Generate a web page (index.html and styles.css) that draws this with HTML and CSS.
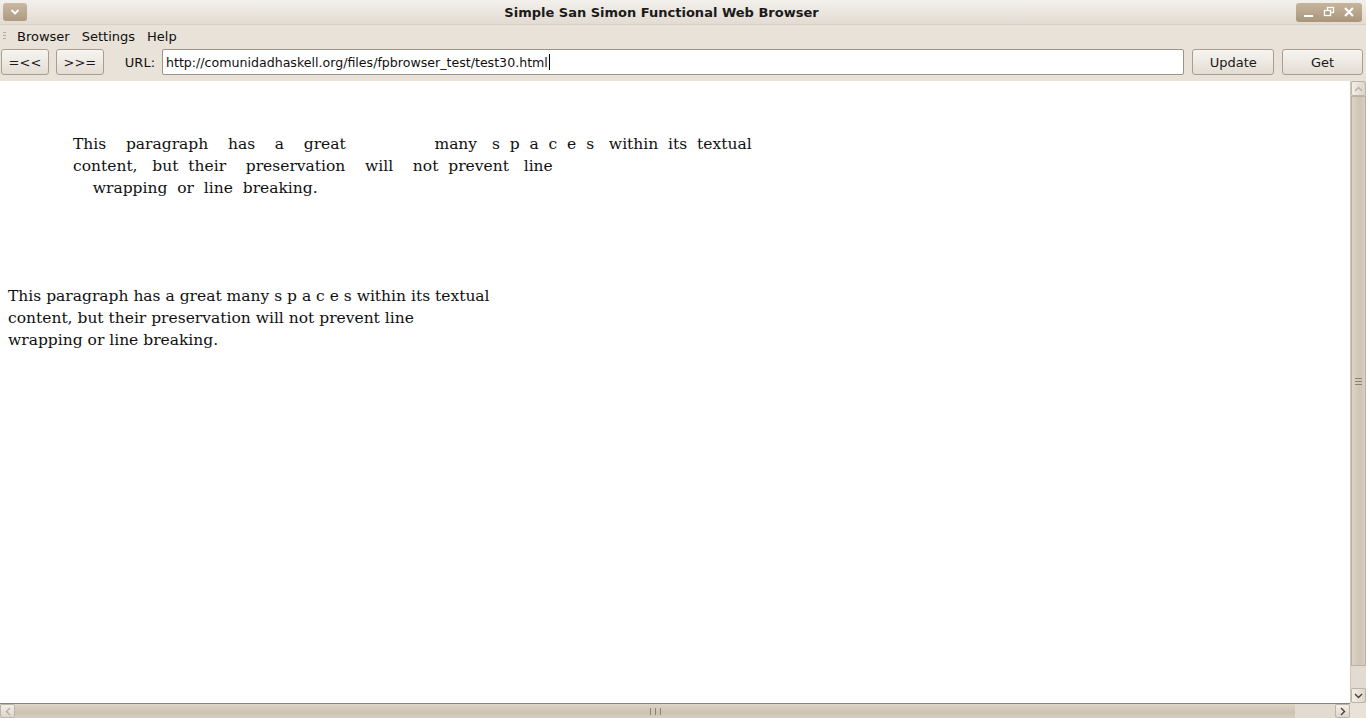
FILE: index.html
```html
<!DOCTYPE html>
<html>
<head>
<meta charset="utf-8">
<title>Simple San Simon Functional Web Browser</title>
<link rel="stylesheet" href="styles.css">
</head>
<body>
<div class="window">
  <div class="titlebar">
    <div class="menu-btn">
      <svg width="10" height="6" viewBox="0 0 10 6"><path d="M1.5 1 L5 4.5 L8.5 1" fill="none" stroke="#fff" stroke-width="1.8"/></svg>
    </div>
    <div class="title">Simple San Simon Functional Web Browser</div>
    <div class="wm-btns">
      <svg width="14" height="14" viewBox="0 0 14 14"><rect x="2" y="10" width="9" height="2" fill="#fff"/></svg>
      <svg width="14" height="14" viewBox="0 0 14 14"><rect x="5.5" y="2.5" width="6" height="5" fill="none" stroke="#fff" stroke-width="1.3"/><rect x="2.5" y="5.5" width="6" height="5" fill="#b09d83" stroke="#fff" stroke-width="1.3"/></svg>
      <svg width="14" height="14" viewBox="0 0 14 14"><path d="M3 3 L11 11 M11 3 L3 11" stroke="#fff" stroke-width="2.2"/></svg>
    </div>
  </div>
  <div class="menubar">
    <div class="handle"></div>
    <span class="menu-item">Browser</span>
    <span class="menu-item">Settings</span>
    <span class="menu-item">Help</span>
  </div>
  <div class="toolbar">
    <button class="btn nav">=&lt;&lt;</button>
    <button class="btn nav">&gt;&gt;=</button>
    <span class="url-label">URL:</span>
    <div class="entry"><span>http://comunidadhaskell.org/files/fpbrowser_test/test30.html</span><span class="caret"></span></div>
    <button class="btn act">Update</button>
    <button class="btn act">Get</button>
  </div>
  <div class="main">
    <div class="viewport">
      <div class="content">
        <div class="pre-para"><div class="l1">This    paragraph    has    a    great                  many   s  p  a  c  e  s   within  its  textual</div><div class="l2">content,   but  their    preservation    will    not  prevent   line</div><div class="l3">    wrapping  or  line  breaking.</div></div>
        <p class="plain">This paragraph has a great many s p a c e s within its textual<br>content, but their preservation will not prevent line<br>wrapping or line breaking.</p>
      </div>
      <div class="vscroll">
        <div class="arrow-v"><svg width="9" height="6" viewBox="0 0 9 6"><path d="M1 5 L4.5 1.5 L8 5" fill="none" stroke="#b7ada0" stroke-width="1.4"/></svg></div>
        <div class="vthumb"><div class="grip-v"><i></i><i></i><i></i></div></div>
        <div class="vtrack"></div>
        <div class="arrow-v"><svg width="9" height="6" viewBox="0 0 9 6"><path d="M1 1 L4.5 4.5 L8 1" fill="none" stroke="#4a4035" stroke-width="1.4"/></svg></div>
      </div>
    </div>
    <div class="hbar">
      <div class="hscroll">
        <div class="arrow-h"><svg width="6" height="9" viewBox="0 0 6 9"><path d="M5 1 L1.5 4.5 L5 8" fill="none" stroke="#b7ada0" stroke-width="1.4"/></svg></div>
        <div class="hthumb"><div class="grip-h"><i></i><i></i><i></i></div></div>
        <div class="htrack"></div>
        <div class="arrow-h"><svg width="6" height="9" viewBox="0 0 6 9"><path d="M1 1 L4.5 4.5 L1 8" fill="none" stroke="#4a4035" stroke-width="1.4"/></svg></div>
      </div>
      <div class="corner"></div>
    </div>
  </div>
</div>
</body>
</html>
```

FILE: styles.css
```css
* { box-sizing: border-box; }
html, body { margin: 0; padding: 0; }
body {
  width: 1366px;
  height: 718px;
  overflow: hidden;
  background: #e8e2d8;
  font-family: "DejaVu Sans", sans-serif;
  color: #101010;
}
.window { display: flex; flex-direction: column; height: 718px; }

.titlebar {
  height: 25px;
  display: flex;
  align-items: center;
  padding: 0 4px 0 3px;
  background: linear-gradient(#f3f0ec, #e2dbd1);
  border-bottom: 1px solid #d8d0c4;
}
.menu-btn {
  width: 24px; height: 18px;
  border-radius: 3px;
  background: linear-gradient(#c9b9a3, #ac9a80);
  display: flex; align-items: center; justify-content: center;
}
.title {
  flex: 1;
  text-align: center;
  font-weight: bold;
  font-size: 13px;
  color: #1a1a1a;
}
.wm-btns {
  width: 66px; height: 19px;
  border-radius: 3px;
  background: linear-gradient(#c6b59d, #a8957b);
  display: flex; align-items: center; justify-content: space-around;
  padding: 0 3px;
}

.menubar {
  height: 22px;
  display: flex;
  align-items: center;
  font-size: 13px;
  padding-left: 3px;
}
.handle {
  width: 3px; height: 9px;
  margin-right: 11px;
  background: repeating-linear-gradient(#b5aa9a 0 1px, transparent 1px 3px);
}
.menu-item { margin-right: 12px; }

.toolbar {
  height: 34px;
  display: flex;
  align-items: center;
  padding: 0 3px 4px 1px;
  font-size: 13px;
}
.btn {
  height: 26px;
  font-family: "DejaVu Sans", sans-serif;
  font-size: 13px;
  color: #1a1a1a;
  border: 1px solid #a89e90;
  border-radius: 3px;
  background: linear-gradient(#f7f5f2, #e3dcd2);
  padding: 0;
}
.nav { width: 48px; margin-right: 7px; }
.url-label { margin-left: 14px; margin-right: 7px; }
.entry {
  width: 1024px;
  height: 26px;
  background: #fff;
  border: 1px solid #9d9387;
  border-radius: 2px;
  display: flex; align-items: center;
  padding-left: 3px;
  font-size: 12.6px;
}
.caret { width: 1px; height: 16px; background: #000; margin-left: 1px; }
.act { width: 82px; margin-left: 8px; }
.act:last-child { width: 81px; }

.main { flex: 1; display: flex; flex-direction: column; min-height: 0; }
.viewport { flex: 1; display: flex; min-height: 0; }
.content {
  flex: 1;
  background: #fff;
  font-family: "DejaVu Serif", serif;
  font-size: 15.5px;
  color: #111;
  line-height: 22px;
  padding-top: 52px;
}
.pre-para { margin-left: 73px; white-space: pre; }
.plain { margin: 86px 0 0 8px; }

.vscroll {
  width: 16px;
  display: flex; flex-direction: column;
  background: #e2dbd1;
  border-left: 1px solid #cfc6ba;
}
.arrow-v {
  height: 15px;
  display: flex; align-items: center; justify-content: center;
  background: linear-gradient(90deg, #f2efea, #ddd5ca);
  border: 1px solid #bdb3a6;
  border-radius: 2px;
}
.vthumb {
  flex: 1;
  background: linear-gradient(90deg, #ddd4c7, #cfc4b5 60%, #d8cfc2);
  border: 1px solid #bcb1a3;
  display: flex; align-items: center; justify-content: center;
}
.vtrack { height: 22px; }
.grip-v i { display: block; width: 7px; height: 1px; background: #8e8372; margin: 2px 0; }

.hbar { height: 15px; display: flex; }
.hscroll {
  flex: 1;
  display: flex;
  background: #e2dbd1;
  border-top: 1px solid #8d8271;
}
.arrow-h {
  width: 15px;
  display: flex; align-items: center; justify-content: center;
  background: linear-gradient(#f2efea, #ddd5ca);
  border: 1px solid #bdb3a6;
  border-radius: 2px;
}
.hthumb {
  flex: 1;
  background: linear-gradient(#ddd4c7, #cdc2b2 60%, #d6cdc0);
  display: flex; align-items: center; justify-content: center;
}
.htrack { width: 40px; }
.grip-h { display: flex; }
.grip-h i { display: block; width: 1px; height: 7px; background: #8e8372; margin: 0 2px; }
.corner { width: 16px; background: #e8e2d8; }
```
